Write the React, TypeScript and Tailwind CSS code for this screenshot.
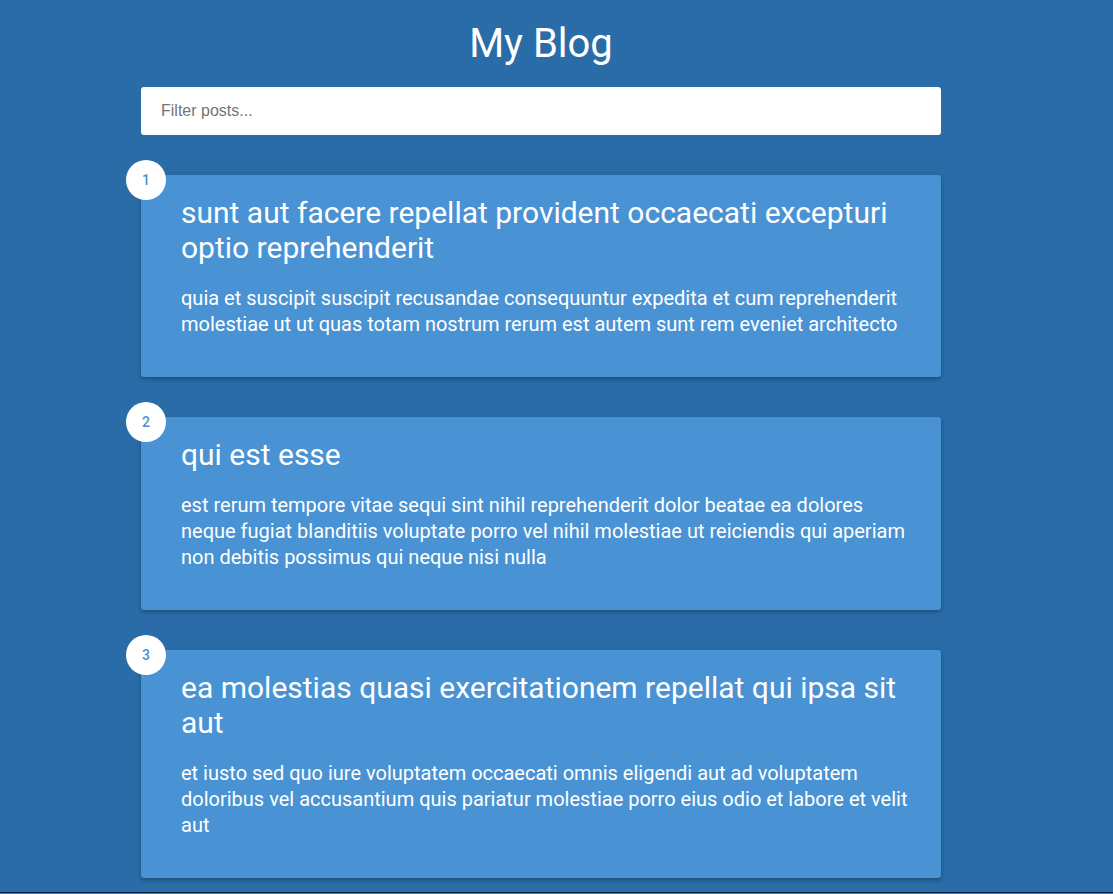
import React from "react";

const posts = [
  {
    id: 1,
    title: "sunt aut facere repellat provident occaecati excepturi optio reprehenderit",
    body: "quia et suscipit suscipit recusandae consequuntur expedita et cum reprehenderit molestiae ut ut quas totam nostrum rerum est autem sunt rem eveniet architecto",
  },
  {
    id: 2,
    title: "qui est esse",
    body: "est rerum tempore vitae sequi sint nihil reprehenderit dolor beatae ea dolores neque fugiat blanditiis voluptate porro vel nihil molestiae ut reiciendis qui aperiam non debitis possimus qui neque nisi nulla",
  },
  {
    id: 3,
    title: "ea molestias quasi exercitationem repellat qui ipsa sit aut",
    body: "et iusto sed quo iure voluptatem occaecati omnis eligendi aut ad voluptatem doloribus vel accusantium quis pariatur molestiae porro eius odio et labore et velit aut",
  },
];

export default function App() {
  return (
    <div
      className="min-h-screen bg-[#296ca8] text-white pb-[100px]"
      style={{ fontFamily: "Roboto, 'Noto Sans', sans-serif" }}
    >
      <div className="ml-[141px] w-[800px] flex flex-col">
        <h1 className="text-[40px] font-normal text-center pt-[20px] leading-[47px] m-0">My Blog</h1>
        <input
          type="text"
          placeholder="Filter posts..."
          className="mt-[20px] h-[48px] w-full bg-white rounded-[3px] px-[20px] text-[16px] text-black placeholder:text-[#757575] outline-none"
          style={{ fontFamily: "'Liberation Sans', Arial, sans-serif" }}
        />
        <div className="flex flex-col gap-[40px] mt-[40px]">
          {posts.map((p) => (
            <div
              key={p.id}
              className="relative bg-[#4992d3] rounded-[3px] shadow-[0_2px_4px_rgba(0,0,0,0.3)] p-[20px] flex"
            >
              <div className="absolute -top-[15px] -left-[15px] w-[40px] h-[40px] rounded-full bg-white text-[#4992d3] text-[14px] font-medium flex items-center justify-center">
                {p.id}
              </div>
              <div className="ml-[20px]">
                <h2 className="text-[30px] font-normal leading-[35px] m-0">{p.title}</h2>
                <p className="text-[20px] leading-[26px] mt-[20px] mb-[20px]">{p.body}</p>
              </div>
            </div>
          ))}
        </div>
      </div>
      <div className="fixed bottom-0 left-0 right-0 h-[2px] border-t border-[#0b1a2a] bg-[#3f7fc0]" />
    </div>
  );
}
